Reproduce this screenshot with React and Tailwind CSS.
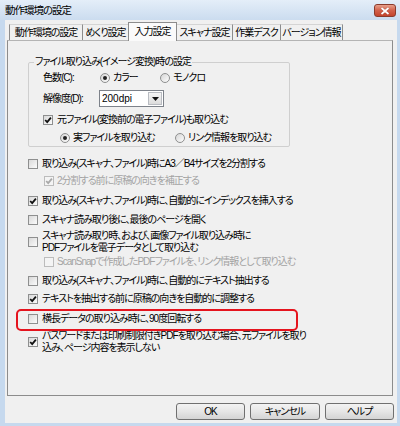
import React from "react";

const Check = ({ checked = false, disabled = false }) => (
  <span
    className={
      disabled
        ? "w-[10px] h-[10px] shrink-0 border border-[#bcbcbc] bg-[#f4f4f4] flex items-center justify-center"
        : "w-[10px] h-[10px] shrink-0 border border-[#8e8f8f] bg-gradient-to-br from-[#d9d9d9] to-[#fbfbfb] flex items-center justify-center"
    }
  >
    {checked && (
      <svg width="8" height="8" viewBox="0 0 8 8">
        <polyline
          points="1.2,4 3.2,6.1 6.9,1.6"
          fill="none"
          stroke={disabled ? "#a8a8a8" : "#111"}
          strokeWidth="1.8"
        />
      </svg>
    )}
  </span>
);

const Radio = ({ checked = false }) => (
  <span className="w-[10px] h-[10px] shrink-0 rounded-full border border-[#8e8f8f] bg-gradient-to-br from-[#d6d6d6] to-[#fdfdfd] flex items-center justify-center">
    {checked && <span className="w-[4px] h-[4px] rounded-full bg-[#222]" />}
  </span>
);

const Tab = ({ w, children, cls }) => (
  <div
    className={`${w} ${cls} h-[16px] border-t border-t-[#d4d4d4] flex items-center justify-center whitespace-nowrap`}
  >
    {children}
  </div>
);

export default function App() {
  return (
    <div className="w-[400px] h-[426px] bg-[#c6d9ee] flex flex-col overflow-hidden text-black text-[10px] leading-[12px] tracking-[-1px] font-['Liberation_Sans','Noto_Sans_CJK_JP',sans-serif] [font-feature-settings:'palt']">
      {/* Title bar */}
      <div className="h-[20px] shrink-0 flex items-start justify-between pl-[5px] pr-[4px] bg-gradient-to-b from-[#e4eef9] to-[#cbdcef]">
        <span className="mt-[4px] text-[10.5px]">動作環境の設定</span>
        <div className="mt-[4px] w-[22px] h-[13px] rounded-[3px] border border-[#8a3b2c] bg-gradient-to-b from-[#e7a08c] via-[#d2604a] to-[#c4442c] flex items-center justify-center">
          <svg width="10" height="8" viewBox="0 0 10 8">
            <path d="M1.5 1 L8.5 7 M8.5 1 L1.5 7" stroke="#5a1a10" strokeWidth="2.6" opacity="0.35" />
            <path d="M1.5 1 L8.5 7 M8.5 1 L1.5 7" stroke="#fff" strokeWidth="1.8" />
          </svg>
        </div>
      </div>

      {/* Body */}
      <div className="flex-1 ml-[5px] mr-[3px] mb-[3px] bg-[#f0f0f0] flex flex-col">
        {/* Tabs */}
        <div className="h-[20px] shrink-0 flex items-end pl-[4px]">
          <Tab w="w-[73px]" cls="border-l border-l-[#8c8c8c]">動作環境の設定</Tab>
          <Tab w="w-[46px]" cls="border-l border-l-[#8c8c8c]">めくり設定</Tab>
          <div className="w-[49px] h-[19px] -mb-[1px] relative z-10 border border-b-0 border-[#8c8c8c] bg-[#fafafa] flex items-center justify-center whitespace-nowrap">
            入力設定
          </div>
          <Tab w="w-[55px]" cls="">スキャナ設定</Tab>
          <Tab w="w-[48px]" cls="border-l border-l-[#8c8c8c]">作業デスク</Tab>
          <Tab w="w-[63px]" cls="border-l border-r border-l-[#8c8c8c] border-r-[#8c8c8c]">バージョン情報</Tab>
        </div>

        {/* Panel */}
        <div className="ml-[2px] w-[386px] h-[356px] shrink-0 border border-[#8c8c8c] border-t-[#b4b4b4] flex flex-col">
          <fieldset className="ml-[20px] mt-[15px] w-[262px] border border-[#cfcfcf] rounded-[2px] pb-[2px]">
            <legend className="ml-[5px] px-[1px] leading-[12px]">
              ファイル取り込み(イメージ変換)時の設定
            </legend>
            <div className="pl-[14px] flex flex-col">
              <div className="mt-[4px] h-[12px] flex items-center whitespace-nowrap">
                <span className="w-[57px]">色数(C):</span>
                <div className="w-[60px] flex items-center gap-[3px]">
                  <Radio checked />
                  <span>カラー</span>
                </div>
                <div className="flex items-center gap-[3px]">
                  <Radio />
                  <span>モノクロ</span>
                </div>
              </div>
              <div className="mt-[6px] h-[17px] flex items-center whitespace-nowrap">
                <span className="w-[56px]">解像度(D):</span>
                <div className="w-[65px] h-[17px] border border-[#7d828a] bg-white flex items-center">
                  <span className="flex-1 pl-[2px] tracking-normal">200dpi</span>
                  <div className="w-[14px] h-[13px] mr-[1px] border border-[#b9bcc2] bg-gradient-to-b from-[#f5f5f5] to-[#dcdcdc] flex items-center justify-center">
                    <svg width="7" height="4" viewBox="0 0 7 4">
                      <polygon points="0,0 7,0 3.5,4" fill="#111" />
                    </svg>
                  </div>
                </div>
              </div>
              <div className="mt-[7px] h-[12px] flex items-center gap-[4px] whitespace-nowrap">
                <Check checked />
                <span>元ファイル(変換前の電子ファイル)も取り込む</span>
              </div>
              <div className="mt-[6px] h-[12px] pl-[17px] flex items-center whitespace-nowrap">
                <div className="w-[115px] flex items-center gap-[3px]">
                  <Radio checked />
                  <span>実ファイルを取り込む</span>
                </div>
                <div className="flex items-center gap-[3px]">
                  <Radio />
                  <span>リンク情報を取り込む</span>
                </div>
              </div>
            </div>
          </fieldset>

          <div className="ml-[20px] flex flex-col whitespace-nowrap">
            <div className="mt-[11px] h-[12px] flex items-center gap-[4px]">
              <Check />
              <span>取り込み(スキャナ、ファイル)時にA3／B4サイズを2分割する</span>
            </div>
            <div className="mt-[5px] h-[12px] ml-[16px] flex items-center gap-[3px] text-[#a3a3a3]">
              <Check checked disabled />
              <span>2分割する前に原稿の向きを補正する</span>
            </div>
            <div className="mt-[8px] h-[12px] flex items-center gap-[4px]">
              <Check checked />
              <span>取り込み(スキャナ、ファイル)時に、自動的にインデックスを挿入する</span>
            </div>
            <div className="mt-[7px] h-[12px] flex items-center gap-[4px]">
              <Check />
              <span>スキャナ読み取り後に、最後のページを開く</span>
            </div>
            <div className="mt-[4px] h-[24px] flex items-center gap-[4px]">
              <Check />
              <span>
                スキャナ読み取り時、および、画像ファイル取り込み時に
                <br />
                PDFファイルを電子データとして取り込む
              </span>
            </div>
            <div className="mt-[2px] h-[12px] ml-[16px] flex items-center gap-[3px] text-[#a3a3a3]">
              <Check disabled />
              <span>ScanSnapで作成したPDFファイルを、リンク情報として取り込む</span>
            </div>
            <div className="mt-[7px] h-[12px] flex items-center gap-[4px]">
              <Check />
              <span>取り込み(スキャナ、ファイル)時に、自動的にテキスト抽出する</span>
            </div>
            <div className="mt-[6px] h-[12px] flex items-center gap-[4px]">
              <Check checked />
              <span>テキストを抽出する前に原稿の向きを自動的に調整する</span>
            </div>
            <div className="mt-[8px] h-[12px] flex items-center gap-[4px] relative">
              <Check />
              <span>横長データの取り込み時に、90度回転する</span>
              <span className="absolute -left-[12px] -top-[4px] w-[282px] h-[22px] border-2 border-[#e5141e] rounded-[5px] pointer-events-none" />
            </div>
            <div className="mt-[5px] h-[24px] flex items-center gap-[4px]">
              <Check checked />
              <span>
                パスワードまたは印刷制限付きPDFを取り込む場合、元ファイルを取り
                <br />
                込み、ページ内容を表示しない
              </span>
            </div>
          </div>
        </div>

        {/* Buttons */}
        <div className="mt-[7px] flex justify-end gap-[5px] pr-[3px]">
          {[
            ["OK", "w-[69px]"],
            ["キャンセル", "w-[70px]"],
            ["ヘルプ", "w-[69px]"],
          ].map(([t, w]) => (
            <div
              key={t}
              className={`${w} h-[17px] rounded-[3px] border border-[#707070] bg-gradient-to-b from-[#f3f3f3] via-[#e6e6e6] to-[#d4d4d4] flex items-center justify-center`}
            >
              {t}
            </div>
          ))}
        </div>
      </div>
    </div>
  );
}
